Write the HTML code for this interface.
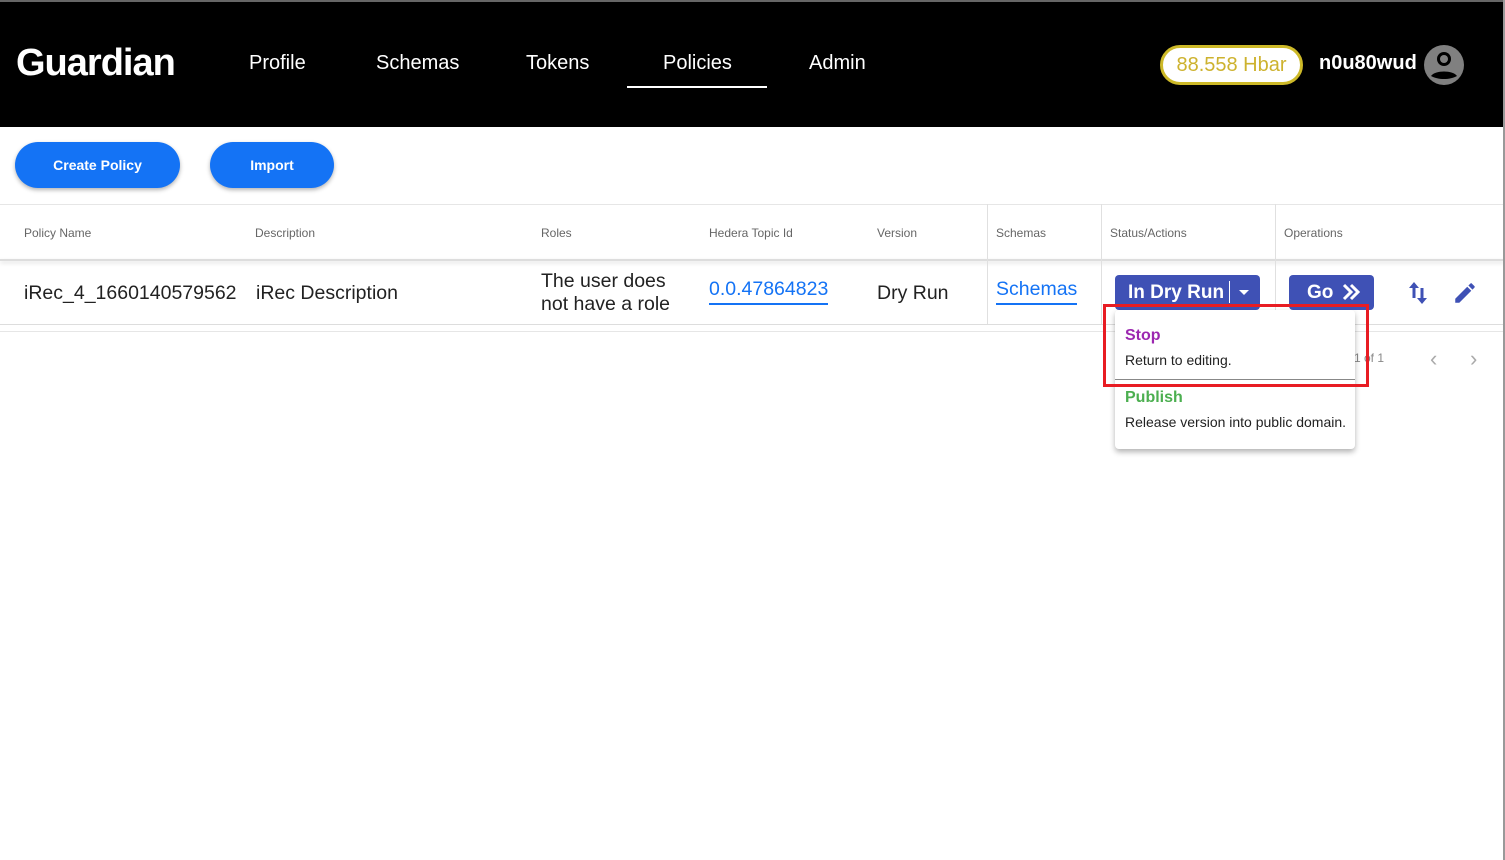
<!DOCTYPE html>
<html><head><style>
*{box-sizing:border-box;margin:0;padding:0}
body{width:1505px;height:860px;background:#fff;font-family:"Liberation Sans",sans-serif;position:relative;overflow:hidden;color:#222}
.hdr{position:absolute;left:0;top:0;width:1505px;height:127px;background:#000;border-top:2px solid #666}
.abs{position:absolute;white-space:nowrap}
.nav{color:#fff;font-size:20px;top:52px}
.btn{position:absolute;background:#1473f5;color:#fff;font-weight:bold;font-size:14px;border-radius:24px;text-align:center;line-height:46px;height:46px;top:142px;box-shadow:0 2px 4px rgba(0,0,0,.3)}
.th{font-size:12px;color:#666;top:226px}
.td{font-size:19.5px;color:#222;top:282px}
.vl{position:absolute;width:1px;background:#e0e0e0}
</style></head><body>
<div class="hdr"></div>
<div class="abs" style="left:16px;top:42px;color:#fff;font-size:38px;font-weight:bold;letter-spacing:-1px">Guardian</div>
<div class="abs nav" style="left:249px">Profile</div>
<div class="abs nav" style="left:376px">Schemas</div>
<div class="abs nav" style="left:526px">Tokens</div>
<div class="abs nav" style="left:663px">Policies</div>
<div class="abs" style="left:627px;top:86px;width:140px;height:2px;background:#fff"></div>
<div class="abs nav" style="left:809px">Admin</div>
<div class="abs" style="left:1160px;top:45px;width:143px;height:40px;border-radius:20px;background:#fff;border:3px solid #cdb928;color:#cdb22e;font-size:20px;text-align:center;line-height:34px">88.558 Hbar</div>
<div class="abs" style="left:1319px;top:52px;color:#fff;font-size:20px;font-weight:bold">n0u80wud</div>
<svg class="abs" style="left:1423px;top:44px" width="42" height="42" viewBox="0 0 42 42"><circle cx="21" cy="21" r="20" fill="#808080"/><circle cx="21" cy="15" r="7" fill="#000"/><path d="M8 32c4-6 22-6 26 0c-4 2-8 3-13 3s-9-1-13-3z" fill="#000"/><circle cx="21" cy="15" r="4" fill="#808080"/></svg>
<div class="btn" style="left:15px;width:165px">Create Policy</div>
<div class="btn" style="left:210px;width:124px">Import</div>
<div class="abs" style="left:0;top:204px;width:1505px;height:1px;background:#e6e6e6"></div>
<div class="abs" style="left:0;top:259px;width:1505px;height:2px;background:#ddd;box-shadow:0 2px 4px rgba(0,0,0,.15)"></div>
<div class="abs" style="left:0;top:324px;width:1505px;height:1px;background:#ddd"></div>
<div class="abs" style="left:0;top:331px;width:1505px;height:1px;background:#e6e6e6"></div>
<div class="vl" style="left:987px;top:204px;height:120px"></div>
<div class="vl" style="left:1101px;top:204px;height:120px"></div>
<div class="vl" style="left:1275px;top:204px;height:120px"></div>
<div class="abs" style="left:1503px;top:0;width:2px;height:860px;background:#999"></div>
<div class="abs th" style="left:24px">Policy Name</div>
<div class="abs th" style="left:255px">Description</div>
<div class="abs th" style="left:541px">Roles</div>
<div class="abs th" style="left:709px">Hedera Topic Id</div>
<div class="abs th" style="left:877px">Version</div>
<div class="abs th" style="left:996px">Schemas</div>
<div class="abs th" style="left:1110px">Status/Actions</div>
<div class="abs th" style="left:1284px">Operations</div>
<div class="abs td" style="left:24px">iRec_4_1660140579562</div>
<div class="abs td" style="left:256px">iRec Description</div>
<div class="abs" style="left:541px;top:270px;font-size:19.5px;line-height:23px">The user does<br>not have a role</div>
<div class="abs" style="left:709px;top:278px;font-size:19.5px;color:#1473f5;border-bottom:2px solid #1473f5;padding-bottom:2px">0.0.47864823</div>
<div class="abs td" style="left:877px">Dry Run</div>
<div class="abs" style="left:996px;top:278px;font-size:19.5px;color:#1473f5;border-bottom:2px solid #1473f5;padding-bottom:2px">Schemas</div>
<div class="abs" style="left:1115px;top:275px;width:145px;height:35px;background:#3f51b5;border-radius:4px;color:#fff;font-size:19px;font-weight:bold;line-height:35px;padding-left:13px">In Dry Run<span style="position:absolute;left:114px;top:6px;width:1px;height:22px;background:#fff"></span><span style="position:absolute;left:124px;top:15px;border-left:5px solid transparent;border-right:5px solid transparent;border-top:5px solid #fff"></span></div>
<div class="abs" style="left:1289px;top:275px;width:85px;height:35px;background:#3f51b5;border-radius:4px;color:#fff;font-size:19px;font-weight:bold;line-height:35px;padding-left:18px">Go</div>
<svg class="abs" style="left:1341px;top:283px" width="20" height="18" viewBox="0 0 20 18"><path d="M3 2l7 7-7 7M10 2l7 7-7 7" stroke="#fff" stroke-width="3" fill="none"/></svg>
<svg class="abs" style="left:1406px;top:280px" width="24" height="26" viewBox="0 0 24 26"><path d="M8 2l-5 6h3.5v10h3V8H13z M16 24l5-6h-3.5V8h-3v10H11z" fill="#3f51b5"/></svg>
<svg class="abs" style="left:1452px;top:280px" width="26" height="26" viewBox="0 0 24 24"><path d="M3 17.25V21h3.75L17.81 9.94l-3.75-3.75L3 17.25zM20.71 7.04a1 1 0 000-1.41l-2.34-2.34a1 1 0 00-1.41 0l-1.83 1.83 3.75 3.75 1.83-1.83z" fill="#3f51b5"/></svg>
<div class="abs" style="left:1354px;top:351px;font-size:12px;color:#888">1 of 1</div>
<div class="abs" style="left:1430px;top:346px;font-size:22px;color:#aaa">‹</div>
<div class="abs" style="left:1470px;top:346px;font-size:22px;color:#aaa">›</div>
<div class="abs" style="left:1115px;top:310px;width:240px;height:139px;background:#fff;border-radius:4px;box-shadow:0 3px 6px rgba(0,0,0,.3)">
<div class="abs" style="left:10px;top:17px;font-size:16px;font-weight:bold;color:#9c27b0">Stop</div>
<div class="abs" style="left:10px;top:42px;font-size:14px;color:#222">Return to editing.</div>
<div class="abs" style="left:0;top:69px;width:240px;height:1px;background:#888"></div>
<div class="abs" style="left:10px;top:79px;font-size:16px;font-weight:bold;color:#4caf50">Publish</div>
<div class="abs" style="left:10px;top:104px;font-size:14px;color:#222">Release version into public domain.</div>
</div>
<div class="abs" style="left:1103px;top:304px;width:266px;height:83px;border:3px solid #e81c23"></div>
</body></html>
